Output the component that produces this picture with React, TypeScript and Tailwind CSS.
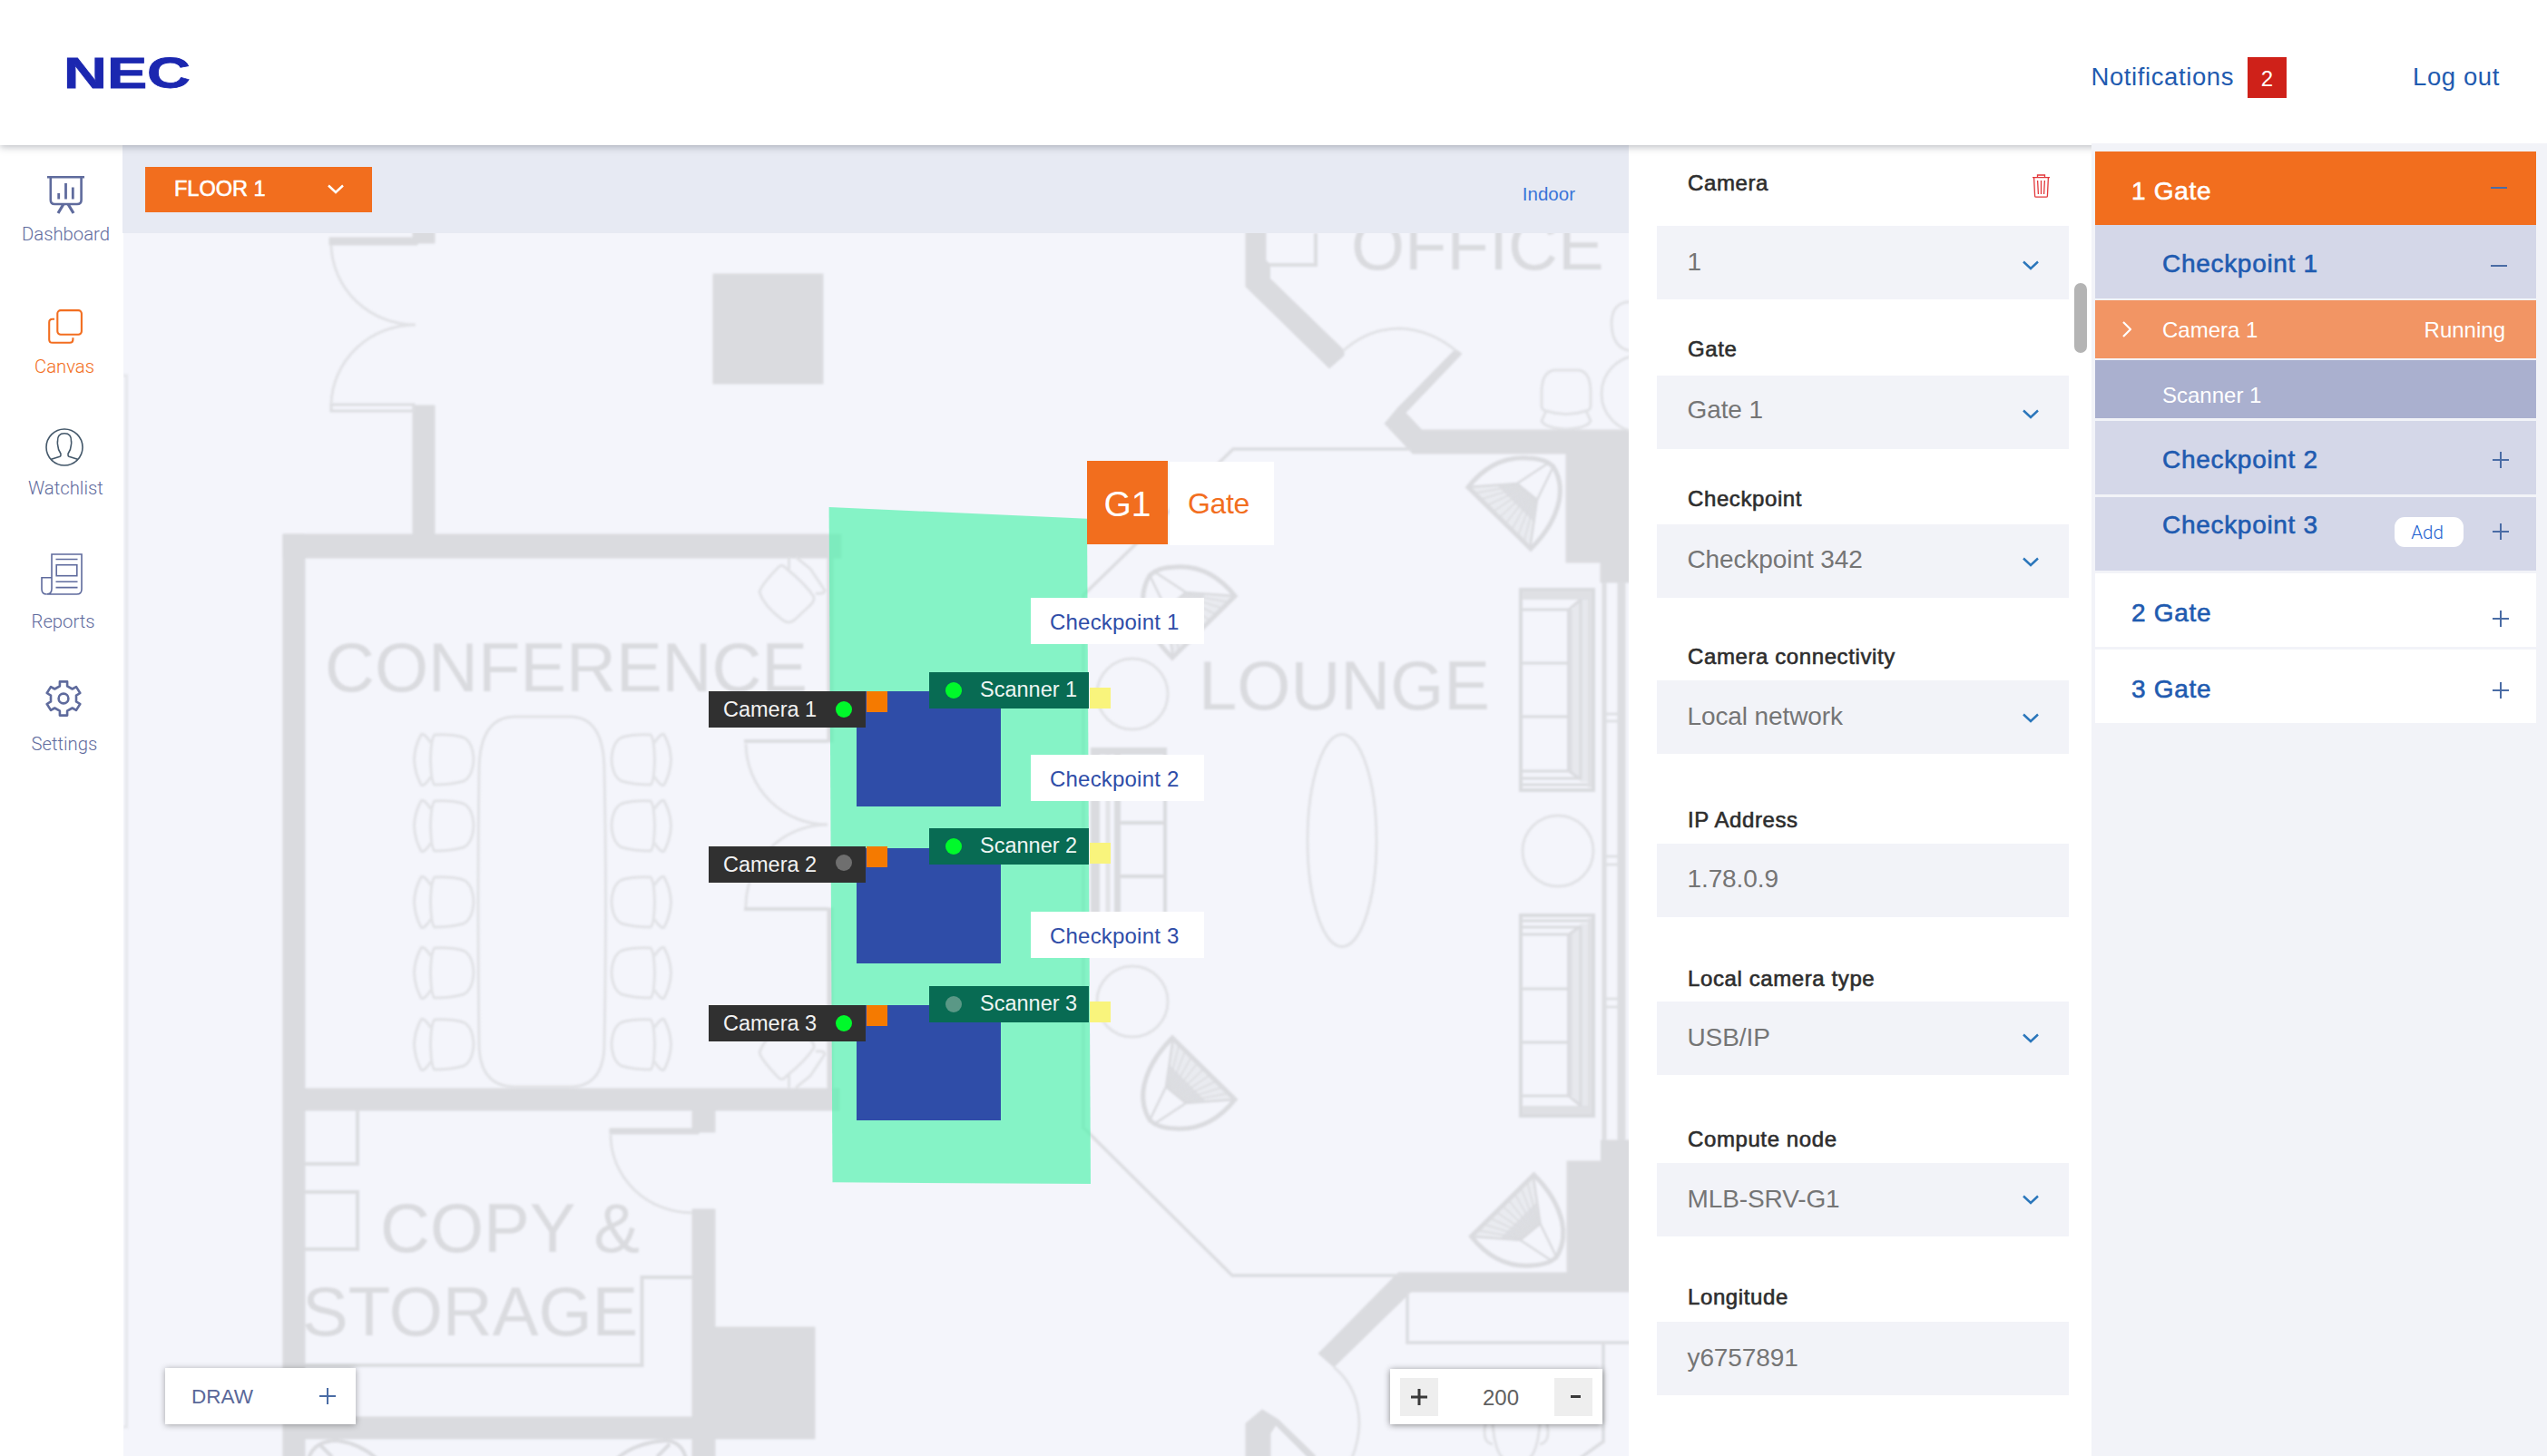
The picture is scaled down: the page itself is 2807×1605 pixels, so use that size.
import React from "react";

const sans = "font-['Liberation_Sans',Arial,sans-serif]";

/* ---------- small icons ---------- */

function Chevron({ className }: { className: string }) {
  return (
    <svg viewBox="0 0 18 11" className={className} fill="none" stroke="currentColor" strokeWidth="2.4">
      <path d="M1 1.5 L9 9 L17 1.5" />
    </svg>
  );
}

function Plus({ className }: { className: string }) {
  return (
    <svg viewBox="0 0 18 18" className={className} stroke="currentColor" strokeWidth="2">
      <path d="M0 9H18M9 0V18" />
    </svg>
  );
}

function Minus({ className }: { className: string }) {
  return (
    <svg viewBox="0 0 18 2" className={className} fill="currentColor">
      <rect width="18" height="2" />
    </svg>
  );
}

function DashboardIcon() {
  return (
    <svg viewBox="0 0 42 42" className="ml-[52px] size-[42px]" fill="none" stroke="#5f6b9d" strokeWidth="2.2">
      <path d="M0 1.2H41" strokeWidth="2.6" />
      <path d="M3.8 2V26.5Q3.8 31 8.3 31H33Q37.6 31 37.6 26.5V2" strokeWidth="2.6" />
      <path d="M12.7 19V25.5M20.5 8V25.5M28.3 12.5V25.5" strokeWidth="2.8" />
      <path d="M18 31L12 41M23 31L29 41" strokeWidth="3.2" />
    </svg>
  );
}

function CanvasIcon() {
  return (
    <svg viewBox="0 0 38 38" className="ml-[53px] size-[38px]" fill="none" stroke="#f26e20" strokeWidth="2.1">
      <rect x="10.3" y="1.1" width="26.6" height="26.6" rx="3.5" />
      <path d="M7 10.8H4.8Q1.2 10.8 1.2 14.4V33.2Q1.2 36.8 4.8 36.8H24Q27.4 36.8 27.4 33.2V31.2" />
    </svg>
  );
}

function WatchlistIcon() {
  return (
    <svg viewBox="0 0 42 42" className="ml-[50px] size-[42px]" fill="none" stroke="#44586a" strokeWidth="1.6">
      <circle cx="21" cy="21" r="20" />
      <path d="M6.5 34.3L16 31.3Q17.3 30.8 17 28.2Q13.8 23.5 13.6 18.5Q13 16.5 13.5 14.5Q13 5.8 21 5.8Q29 5.8 28.5 14.5Q29 16.5 28.4 18.5Q28.2 23.5 25 28.2Q24.7 30.8 26 31.3L35.5 34.3" />
    </svg>
  );
}

function ReportsIcon() {
  return (
    <svg viewBox="0 0 46 46" className="ml-[45px] size-[46px]" fill="none" stroke="#5f6b9d" strokeWidth="1.6">
      <path d="M12 39V1H45V39.5Q45 45 39.5 45H6.5Q12 45 12 39Z" />
      <path d="M12 26.8H1V39.5Q1 45 6.5 45" />
      <path d="M16.5 6.5H40.5M16.5 31.3H40.5M16.5 37.6H40.5" />
      <rect x="17.2" y="12.7" width="22.6" height="12" />
    </svg>
  );
}

function SettingsIcon() {
  return (
    <svg viewBox="0 0 40 40" className="ml-[50px] size-10" fill="none" stroke="#5f6b9d" strokeWidth="2.6" strokeLinejoin="round">
      <path d="M15.9 1.4H24.1V6.3L29.7 9.5L34 7.1L38.3 14L34 16.6V23.4L38.3 26L34 32.9L29.7 30.5L24.1 33.7V38.6H15.9V33.7L10.3 30.5L6 32.9L1.7 26L6 23.4V16.6L1.7 14L6 7.1L10.3 9.5L15.9 6.3Z" />
      <circle cx="20" cy="20" r="5.4" />
    </svg>
  );
}

function TrashIcon() {
  return (
    <svg viewBox="0 0 19 26" className="mt-[3px] h-[26px] w-[19px]" fill="none" stroke="#e2383b" strokeWidth="1.3">
      <path d="M0 3.6H19M5.5 3.6V1H13.5V3.6M1.6 3.8L2.6 24.2Q2.7 25.2 3.8 25.2H15.2Q16.3 25.2 16.4 24.2L17.4 3.8" />
      <path d="M5.6 7L6.4 22M9.5 7V22M13.4 7L12.6 22" />
    </svg>
  );
}

/* ---------- floor plan ---------- */

function MeetingChair({ y, flip }: { y: number; flip?: boolean }) {
  return (
    <g transform={flip ? `translate(1196 ${y}) scale(-1 1)` : `translate(0 ${y})`}>
      <path d="M479 1Q498 0 511 4Q521 9 522 28Q521 47 511 52Q498 56 479 56Q475 53 474.500 28Q475 5 479 1Z" />
      <path d="M475 10Q467 -2 464 1Q457 14 456.500 28Q457 43 464 56Q467 59 475 47" />
    </g>
  );
}

const fan = [0.1, 0.2, 0.3, 0.4, 0.5, 0.6, 0.7, 0.8, 0.9];

function Armchair({ transform }: { transform?: string }) {
  return (
    <g transform={transform}>
      <path d="M1617 537L1672 533L1694 551L1686 606Z" fill="#dadbdf" fillOpacity="0.4" stroke="none" />
      <path d="M1650 535L1672 532L1695 551L1690 575Z" fill="#dadbdf" fillOpacity="0.8" stroke="none" />
      {fan.map((t) => (
        <path key={t} strokeWidth="1.5" d={`M${1617 + 69 * t} ${537 + 69 * t}L${1672 + 22 * t} ${533 + 18 * t}`} />
      ))}
      <path d="M1617 537L1672 533L1694 551L1686 606M1672 533L1707 510M1694 551L1713 512" strokeWidth="2.500" />
      <path d="M1618 537Q1646 502 1684 505Q1708 506 1714 518Q1722 534 1718 553Q1712 580 1687 605Z" strokeWidth="5" />
    </g>
  );
}

function WallSofa({ transform }: { transform?: string }) {
  return (
    <g transform={transform}>
      <path d="M1676 650H1756V871H1676Z" strokeWidth="4" />
      <path d="M1676 649H1757V661H1676ZM1727 672H1733V851H1727ZM1750 655H1757V868H1750Z" fill="#dadbdf" fillOpacity=".8" stroke="none" />
      <path d="M1733 672L1742 660H1750V862H1742L1733 851Z" fill="#dadbdf" fillOpacity=".5" stroke="none" />
      <path d="M1676 672H1729M1676 731H1729M1676 790H1729M1676 850H1729M1676 858H1740M1676 865H1750M1729 672V850M1729 672L1742 661M1729 850L1742 859M1742 661V859" strokeWidth="3" />
    </g>
  );
}

function CornerSeat() {
  return (
    <>
      <path d="M858 625Q862 621 867 627Q888 644 897 658Q898 663 891 669L876 683Q869 689 862 683Q842 668 837 653Q838 646 858 625Z" />
      <path d="M869.500 614V628M877 614L893 627L909 651Q909 655 899 654" />
    </>
  );
}

function FloorPlan() {
  return (
    <svg viewBox="136 257 1659 1348" className="absolute inset-0 size-full">
      <g className="blur-[0.8px]">
        <path d="M136 414H139.500V1573H136" fill="none" stroke="#e6e7eb" strokeWidth="3" />

        {/* solid walls */}
        <g fill="#dadbdf" stroke="#dadbdf" strokeWidth="1" strokeLinejoin="round">
          <path d="M455 250H479V268H455Z" />
          <path d="M363 262H460V270H363Z" />
          <path d="M455 447H479V600H455Z" />
          <path d="M312 589H927V615H312Z" />
          <path d="M312 589H336V1610H312Z" />
          <path d="M786 302H907V423H786Z" />
          <path d="M336 1200H925V1224H336Z" />
          <path d="M763 1224H788V1248H763Z" />
          <path d="M672 1244H770V1250H672Z" />
          <path d="M763 1333H788V1463H898V1586H788V1610H763V1586H336V1562H763Z" />
          <path d="M1373 250H1395V287L1399.500 291V307L1481 386V392L1465 406L1373 316Z" />
          <path d="M1604 385L1611 390L1549 455L1567 474H1800V642H1764V620H1726V500H1557L1526 467L1541 449Z" />
          <path d="M1800 1257H1764.500V1280H1727V1403H1541L1453 1492L1470 1507L1555 1424H1800Z" />
          <path d="M1373 1610V1569L1391 1554L1409 1565L1450 1605L1444 1609L1406 1571L1400 1580V1610Z" />
          <path d="M912 615H918V818H912ZM912 1001H918V1200H912Z" />
        </g>

        {/* thin partitions */}
        <g fill="none" stroke="#dcdde1" strokeWidth="4">
          <path d="M365 446H456V453H365Z" strokeWidth="3" />
          <path d="M820 817H912M820 1002H912" strokeWidth="4" />
          <path d="M336 1283H394V1224M336 1314H394V1377H336" />
          <path d="M763 1408H707.500V1505H336" />
          <path d="M1399 292H1450V257" />
          <path d="M1555 495H1359L1194 656V1243L1358 1406H1545" strokeWidth="3.500" />
          <path d="M1768 642V1257" strokeWidth="5" />
          <path d="M1787 642V1257" strokeWidth="9" />
          <path d="M1768 787H1783M1768 795H1783M1768 944H1783M1768 953H1783M1768 1101H1783M1768 1110H1783" strokeWidth="2.500" />
          <path d="M1551 1424V1480H1800M1767 1480V1589L1742 1607" strokeWidth="3.500" />
        </g>

        {/* doors and furniture */}
        <g fill="none" stroke="#e1e2e6" strokeWidth="3">
          <path d="M365 270A93 90 0 0 0 458 358M365 446A93 90 0 0 1 458 358" />
          <path d="M822 820A90 90 0 0 0 912 909M822 1000A90 90 0 0 1 912 909" />
          <path d="M673 1251A90 86 0 0 0 763 1337" />
          <path d="M1480 387Q1508 362 1543 362Q1578 364 1605 387" />
          <path d="M1470 1507Q1498 1530 1498 1571Q1497 1590 1490 1607" />
          <path d="M528 850Q528 790 568 790H628Q666 790 666 850Q669 990 666 1150Q666 1198 628 1198H568Q528 1198 528 1150Q526 990 528 850Z" />
          {[809, 882, 966, 1044, 1123].map((y) => (
            <React.Fragment key={y}>
              <MeetingChair y={y} />
              <MeetingChair y={y} flip />
            </React.Fragment>
          ))}
          <CornerSeat />
          <g transform="translate(0 1813) scale(1 -1)">
            <CornerSeat />
          </g>
          <circle cx="1248" cy="765" r="39" />
          <circle cx="1248" cy="1104" r="39" />
          <circle cx="1717" cy="938" r="39" />
          <circle cx="1807" cy="434" r="42" />
          <ellipse cx="1479" cy="926.500" rx="38" ry="117" />
          <path d="M1704 453Q1699 452 1699 447V430Q1700 408 1715 408H1738Q1752 408 1753 430V447Q1753 452 1748 453Q1726 460 1704 453ZM1704 453L1699 464Q1703 472 1726 473Q1749 472 1753 464L1748 453" />
          <path d="M1800 333Q1776 331 1776 357Q1777 386 1800 387" />
          <path d="M1645 1570Q1648 1605 1660 1610M1697 1570Q1694 1605 1682 1610M1637 1570Q1633 1590 1645 1592M1705 1570Q1709 1590 1697 1592" />
        </g>
        <g fill="none" stroke="#dadbdf">
          <Armchair />
          <Armchair transform="translate(2979 120) scale(-1 1)" />
          <Armchair transform="translate(2979 1749) scale(-1 -1)" />
          <Armchair transform="translate(3.5 1900) scale(1 -1)" />
          <WallSofa />
          <WallSofa transform="translate(0 1880) scale(1 -1)" />
          <path d="M1202 828H1286" strokeWidth="8" />
          <path d="M1207 830V1024" strokeWidth="10" />
          <path d="M1221 830V1024" strokeWidth="5" strokeOpacity=".7" />
          <path d="M1231.500 830V1024" strokeWidth="7" />
          <path d="M1284 830V1024M1234 907H1284M1234 966H1284" strokeWidth="4" />
          <path d="M340 1608Q346 1588 372 1588Q398 1592 415 1608M352 1592L366 1606M680 1608Q700 1590 735 1588Q752 1590 756 1608M738 1592L724 1606" strokeWidth="4" />
        </g>

        <g fill="#dadbdf" fontSize="76" fontFamily="'Liberation Sans', Arial, sans-serif">
          <text x="358" y="762">CONFERENCE</text>
          <text x="1321" y="782">LOUNGE</text>
          <text x="419" y="1380">COPY &amp;</text>
          <text x="333" y="1472">STORAGE</text>
          <text x="1489" y="297">OFFICE</text>
        </g>
      </g>
      <path d="M913.600 559L1198 571.700L1202 1305L917.500 1303.300Z" fill="#55f2af" fillOpacity="0.7" />
    </svg>
  );
}

/* ---------- devices placed on the plan ---------- */

const zones = ["top-[762px]", "top-[935px]", "top-[1108px]"];

const zoneLabels = [
  { text: "Checkpoint 1", pos: "top-[659px]" },
  { text: "Checkpoint 2", pos: "top-[832px]" },
  { text: "Checkpoint 3", pos: "top-[1005px]" },
];

const cameras = [
  { text: "Camera 1", pos: "top-[762px]", dot: "bg-[#00f92b]" },
  { text: "Camera 2", pos: "top-[933px]", dot: "-mt-[5px] bg-[#6f6f6f]" },
  { text: "Camera 3", pos: "top-[1108px]", dot: "bg-[#00f92b]" },
];

const scanners = [
  { text: "Scanner 1", pos: "top-[741px]", mark: "top-[758px]", dot: "bg-[#00f92b]" },
  { text: "Scanner 2", pos: "top-[913px]", mark: "top-[929px]", dot: "bg-[#00f92b]" },
  { text: "Scanner 3", pos: "top-[1087px]", mark: "top-[1104px]", dot: "bg-[#5a9886]" },
];

function Devices() {
  return (
    <div className="absolute -left-[136px] -top-[257px]">
      {zones.map((pos) => (
        <div key={pos} className={`absolute left-[944px] h-[127px] w-[159px] bg-[#2f4da8] ${pos}`} />
      ))}
      {cameras.map((c) => (
        <React.Fragment key={c.text}>
          <div className={`absolute left-[781px] flex h-10 w-[173px] items-center justify-between bg-[#303030] pl-4 pr-[15px] text-[23.5px] leading-none text-[#f2f2f2] ${c.pos}`}>
            <span className="mt-0.5 whitespace-nowrap">{c.text}</span>
            <span className={`size-[18px] rounded-full ${c.dot}`} />
          </div>
          <div className={`absolute left-[955px] size-[23px] bg-[#f57a00] ${c.pos}`} />
        </React.Fragment>
      ))}
      {scanners.map((s) => (
        <React.Fragment key={s.text}>
          <div className={`absolute left-[1024px] flex h-10 w-44 items-center bg-[#086b53] pl-[18px] text-[23.5px] leading-none text-[#eef6f3] ${s.pos}`}>
            <span className={`size-[18px] rounded-full ${s.dot}`} />
            <span className="ml-5 whitespace-nowrap">{s.text}</span>
          </div>
          <div className={`absolute left-[1201px] size-[23px] bg-[#f9f47c] ${s.mark}`} />
        </React.Fragment>
      ))}
      {zoneLabels.map((z) => (
        <div key={z.text} className={`absolute left-[1136px] flex h-[51px] w-[191px] items-center whitespace-nowrap bg-white pl-[21px] pt-0.5 text-[24px] leading-none tracking-[0.2px] text-[#2f4da8] ${z.pos}`}>
          {z.text}
        </div>
      ))}
      <div className="absolute left-[1198px] top-[508px] flex items-start">
        <div className="flex h-[92px] w-[89px] items-center justify-center bg-[#f26e1e] pt-[3px] text-[39px] leading-none text-white">G1</div>
        <div className="ml-0.5 mt-px flex h-[92px] w-[115px] items-center bg-white pl-[20px] text-[32px] leading-none tracking-[-0.4px] text-[#f26e1e]">Gate</div>
      </div>
    </div>
  );
}

/* ---------- page regions ---------- */

const nav = [
  { text: "Dashboard", Icon: DashboardIcon, item: "mt-[34px]", label: "ml-6 mt-2.5 text-[#5f6b9d]" },
  { text: "Canvas", Icon: CanvasIcon, item: "mt-[71px]", label: "ml-[38px] mt-[13px] text-[#f26e20]" },
  { text: "Watchlist", Icon: WatchlistIcon, item: "mt-14", label: "ml-[31px] mt-3 text-[#5f6b9d]" },
  { text: "Reports", Icon: ReportsIcon, item: "mt-[60px]", label: "ml-[34.5px] mt-[17px] text-[#5f6b9d]" },
  { text: "Settings", Icon: SettingsIcon, item: "mt-[53px]", label: "ml-[34.5px] mt-[18px] text-[#5f6b9d]" },
];

function Sidebar() {
  return (
    <nav className="flex w-[135px] shrink-0 flex-col bg-white">
      {nav.map(({ text, Icon, item, label }) => (
        <a key={text} className={`flex flex-col items-start ${item}`}>
          <Icon />
          <span className={`font-[Roboto,sans-serif] text-[20.3px] font-light leading-6 ${label}`}>{text}</span>
        </a>
      ))}
    </nav>
  );
}

function Header() {
  return (
    <header className="relative z-10 flex h-40 shrink-0 items-start bg-white shadow-[0_2px_8px_rgba(60,65,80,0.35)]">
      <svg viewBox="0 0 148 60" className="ml-[67px] mt-[50px] h-[60px] w-[148px]">
        <text x="3" y="47" fontSize="48.500" fontWeight="700" fill="#1b27b0" stroke="#1b27b0" strokeWidth="0.8" textLength="140" lengthAdjust="spacingAndGlyphs" fontFamily="'Liberation Sans', Arial, sans-serif">
          NEC
        </text>
      </svg>
      <div className="ml-auto flex items-start text-[27.5px] leading-7 tracking-[0.6px] text-[#1f5bb0]">
        <span className="mt-[70.5px]">Notifications</span>
        <span className="ml-[15px] mr-px mt-[63px] flex h-[45px] w-[43px] items-center justify-center bg-[#cf2119] pt-0.5 text-[24px] leading-none tracking-normal text-white">2</span>
        <span className="ml-[138px] mr-[52px] mt-[70.5px]">Log out</span>
      </div>
    </header>
  );
}

function CanvasArea() {
  return (
    <main className="flex w-[1660px] shrink-0 flex-col bg-[#f4f5fb]">
      <div className="flex h-[97px] shrink-0 items-start justify-between bg-[#e7eaf3]">
        <button className="ml-[25px] mt-6 flex h-[50px] w-[250px] items-center justify-between bg-[#f26e1e] pl-8 pr-[31px] text-[23.5px] leading-none text-white [-webkit-text-stroke:0.6px_white]">
          <span className="-mt-px">FLOOR 1</span>
          <Chevron className="-mt-0.5 h-[11px] w-[18px]" />
        </button>
        <span className="mr-[59px] mt-[41.5px] text-[20.5px] leading-6 text-[#3a74d8]">Indoor</span>
      </div>
      <div className="relative flex flex-1 items-end justify-between overflow-hidden border-l border-white pb-[35px] pl-[46px] pr-[29px]">
        <FloorPlan />
        <Devices />
        <button className="relative flex h-[62px] w-[210px] items-center justify-between bg-white pl-[29px] pr-[22px] text-[22.5px] leading-none text-[#5a6899] shadow-[0_1px_7px_rgba(0,0,0,0.35)]">
          <span className="mt-0.5">DRAW</span>
          <Plus className="size-[18px] text-[#4a6ca5]" />
        </button>
        <div className="relative flex h-[61px] w-[234px] items-center justify-between bg-white px-[11px] text-[24px] leading-none text-[#606060] shadow-[0_1px_7px_rgba(0,0,0,0.45)]">
          <span className="flex size-[42px] items-center justify-center bg-[#eeeeee]">
            <svg viewBox="0 0 18 18" className="size-[18px]" stroke="#3a3a3a" strokeWidth="3">
              <path d="M0 9H18M9 0V18" />
            </svg>
          </span>
          <span className="pl-2.5 pt-[3px]">200</span>
          <span className="flex size-[42px] items-center justify-center bg-[#eeeeee] pl-1.5">
            <span className="h-[3.5px] w-[11px] bg-[#3a3a3a]" />
          </span>
        </div>
      </div>
    </main>
  );
}

const fields = [
  { label: "Camera", value: "1", block: "mt-[29px]", box: "mt-9 pt-[26px]", chevron: "mt-3", trash: true },
  { label: "Gate", value: "Gate 1", block: "mt-[42px]", box: "mt-[18px] pt-6", chevron: "mt-[13px]" },
  { label: "Checkpoint", value: "Checkpoint 342", block: "mt-[42px]", box: "mt-[17px] pt-[25px]", chevron: "mt-[11px]" },
  { label: "Camera connectivity", value: "Local network", block: "mt-[52px]", box: "mt-[15px] pt-[26px]", chevron: "mt-2.5" },
  { label: "IP Address", value: "1.78.0.9", block: "mt-[60px]", box: "mt-[15px] pt-[25px]" },
  { label: "Local camera type", value: "USB/IP", block: "mt-[55px]", box: "mt-3.5 pt-[26px]", chevron: "mt-[9px]" },
  { label: "Compute node", value: "MLB-SRV-G1", block: "mt-[58px]", box: "mt-[15px] pt-[26px]", chevron: "mt-[9px]" },
  { label: "Longitude", value: "y6757891", block: "mt-[54px]", box: "mt-4 pt-[26px]" },
];

function Properties() {
  return (
    <section className="relative flex w-[510px] shrink-0 flex-col bg-white pl-[31px] pr-[25px]">
      {fields.map((f) => (
        <div key={f.label} className={`flex flex-col ${f.block}`}>
          <div className="flex h-6 items-start justify-between pl-[34px] pr-[21px]">
            <span className="pt-px text-[24px] leading-6 tracking-[0.6px] text-[#2d2d2d] [-webkit-text-stroke:0.6px_#2d2d2d]">{f.label}</span>
            {f.trash && <TrashIcon />}
          </div>
          <div className={`flex h-[81px] items-start justify-between bg-[#f2f3f8] pl-[33.5px] pr-[33px] ${f.box}`}>
            <span className="text-[28px] leading-7 tracking-[-0.1px] text-[#757575]">{f.value}</span>
            {f.chevron && <Chevron className={`h-[11px] w-[18px] text-[#2b76bb] ${f.chevron}`} />}
          </div>
        </div>
      ))}
      <div className="absolute right-[5px] top-[152px] h-[77px] w-3.5 rounded-full bg-[#b4b4b4]" />
    </section>
  );
}

const heading = "text-[28px] leading-7 tracking-[0.7px]";
const blueHeading = "text-[#1f5bb0] [-webkit-text-stroke:0.6px_#1f5bb0]";
const icon = "text-[#4a6ca5] shrink-0";

function Tree() {
  return (
    <aside className="relative z-20 -mt-0.5 flex flex-1 flex-col bg-[#f2f3f8] pl-1 pr-3 pt-[9px]">
      <div className="flex h-[81px] items-start justify-between bg-[#f26e1e] pl-10 pr-8">
        <span className={`${heading} mt-[30px] text-white [-webkit-text-stroke:0.6px_white]`}>1 Gate</span>
        <Minus className={`${icon} mt-[39px] h-0.5 w-[18px]`} />
      </div>
      <div className="flex h-[81px] items-start justify-between bg-[#d4d7e8] pl-[74px] pr-8">
        <span className={`${heading} ${blueHeading} mt-[29px]`}>Checkpoint 1</span>
        <Minus className={`${icon} mt-11 h-0.5 w-[18px]`} />
      </div>
      <div className="mt-0.5 flex h-16 items-center bg-[#f29564] pl-[30px] pr-[34px] text-[24px] leading-none text-white">
        <svg viewBox="0 0 10 18" className="h-[18px] w-2.5" fill="none" stroke="white" strokeWidth="2.2">
          <path d="M1 1L9 9L1 17" />
        </svg>
        <span className="ml-[34px] mt-0.5">Camera 1</span>
        <span className="ml-auto mt-0.5">Running</span>
      </div>
      <div className="mt-0.5 flex h-16 items-start bg-[#aab0cf] pl-[74px] pt-[27px] text-[24px] leading-none text-white">Scanner 1</div>
      <div className="mt-[3px] flex h-[81px] items-start justify-between bg-[#d4d7e8] pl-[74px] pr-[30px]">
        <span className={`${heading} ${blueHeading} mt-[29px]`}>Checkpoint 2</span>
        <Plus className={`${icon} mt-[34px] size-[18px]`} />
      </div>
      <div className="mt-[3px] flex h-[81px] items-start bg-[#d4d7e8] pl-[74px] pr-[30px]">
        <span className={`${heading} ${blueHeading} mt-[17px]`}>Checkpoint 3</span>
        <button className="ml-auto mr-8 mt-[22px] flex h-[33px] w-[76px] items-center justify-center rounded-[11px] bg-white pr-1 font-[Roboto,sans-serif] text-[20.5px] font-light leading-none text-[#1c5fd0]">
          <span className="mt-px">Add</span>
        </button>
        <Plus className={`${icon} mt-[29px] size-[18px]`} />
      </div>
      <div className="mt-[3px] flex h-[81px] items-start justify-between bg-white pl-10 pr-[30px]">
        <span className={`${heading} ${blueHeading} mt-[30px]`}>2 Gate</span>
        <Plus className={`${icon} mt-[41px] size-[18px]`} />
      </div>
      <div className="mt-[3px] flex h-[81px] items-start justify-between bg-white pl-10 pr-[30px]">
        <span className={`${heading} ${blueHeading} mt-[30px]`}>3 Gate</span>
        <Plus className={`${icon} mt-9 size-[18px]`} />
      </div>
    </aside>
  );
}

export default function App() {
  return (
    <div className={`flex h-[1605px] w-[2807px] flex-col overflow-hidden bg-white ${sans}`}>
      <Header />
      <div className="flex min-h-0 flex-1">
        <Sidebar />
        <CanvasArea />
        <Properties />
        <Tree />
      </div>
    </div>
  );
}
